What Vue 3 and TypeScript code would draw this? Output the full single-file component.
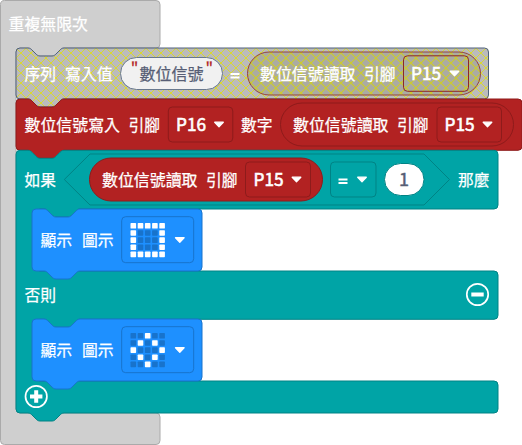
<script setup lang="ts">
const notch = 'c2,0 3,1 4,2l4,4c1,1 2,2 4,2h12c2,0 3,-1 4,-2l4,-4c1,-1 2,-2 4,-2'
const tab = 'c-2,0 -3,1 -4,2l-4,4c-1,1 -2,2 -4,2h-12c-2,0 -3,-1 -4,-2l-4,-4c-1,-1 -2,-2 -4,-2'

function statement(x: number, y: number, right: number, bottom: number): string {
  return `M${x},${y + 4}a4,4 0 0 1 4,-4h8${notch}H${right - 4}a4,4 0 0 1 4,4V${bottom - 4}a4,4 0 0 1 -4,4H${x + 48}${tab}h-8a4,4 0 0 1 -4,-4z`
}

const loopPath =
  `M.5,4.5a4,4 0 0 1 4,-4H156a4,4 0 0 1 4,4V44a4,4 0 0 1 -4,4H64${tab}h-8a4,4 0 0 0 -4,4V409a4,4 0 0 0 4,4H156a4,4 0 0 1 4,4V440.5a4,4 0 0 1 -4,4H4.5a4,4 0 0 1 -4,-4z`

const ifPath =
  `M16,154.300a4,4 0 0 1 4,-4h8${notch}H494a4,4 0 0 1 4,4V205a4,4 0 0 1 -4,4H80${tab}h-4a4,4 0 0 0 -4,4V267a4,4 0 0 0 4,4` +
  `H494a4,4 0 0 1 4,4V315.300a4,4 0 0 1 -4,4H80${tab}h-4a4,4 0 0 0 -4,4V377a4,4 0 0 0 4,4` +
  `H494a4,4 0 0 1 4,4V409a4,4 0 0 1 -4,4H64${tab}h-8a4,4 0 0 1 -4,-4z`

interface Label { x: number; y: number; w: number; text: string; kind?: string }
const labels: Label[] = [
  { x: 8.500, y: 30, w: 79.500, text: '重複無限次' },
  { x: 24.500, y: 80, w: 31.500, text: '序列' },
  { x: 65, y: 80, w: 47.500, text: '寫入值' },
  { x: 139.500, y: 80, w: 64, text: '數位信號', kind: 'dark' },
  { x: 260, y: 80, w: 95.500, text: '數位信號讀取' },
  { x: 364, y: 80, w: 31.500, text: '引腳' },
  { x: 411, y: 80, w: 30, text: 'P15', kind: 'pin' },
  { x: 24.500, y: 131, w: 95.500, text: '數位信號寫入' },
  { x: 128.500, y: 131, w: 31.500, text: '引腳' },
  { x: 176, y: 131, w: 30, text: 'P16', kind: 'pin' },
  { x: 241, y: 131, w: 31.500, text: '數字' },
  { x: 293, y: 131, w: 95.500, text: '數位信號讀取' },
  { x: 397, y: 131, w: 31.500, text: '引腳' },
  { x: 444.500, y: 131, w: 30, text: 'P15', kind: 'pin' },
  { x: 24.500, y: 186, w: 31.500, text: '如果' },
  { x: 102, y: 186, w: 95.500, text: '數位信號讀取' },
  { x: 206, y: 186, w: 31.500, text: '引腳' },
  { x: 253.500, y: 186, w: 30, text: 'P15', kind: 'pin' },
  { x: 399, y: 186, w: 10, text: '1', kind: 'one dark' },
  { x: 458, y: 186, w: 31.500, text: '那麼' },
  { x: 40.500, y: 246, w: 31.500, text: '顯示' },
  { x: 82, y: 246, w: 31.500, text: '圖示' },
  { x: 24.500, y: 301, w: 31.500, text: '否則' },
  { x: 40.500, y: 356, w: 31.500, text: '顯示' },
  { x: 82, y: 356, w: 31.500, text: '圖示' },
]

const arrows: [number, number][] = [
  [454.500, 73.500], [219, 124.500], [487.500, 124.500], [296.500, 179.500], [362, 179.500], [179.800, 240], [179.800, 350],
]

const icons = [
  { y: 223, rows: ['11111', '10001', '10001', '10001', '11111'] },
  { y: 333, rows: ['00100', '01010', '10001', '01010', '00100'] },
]
</script>

<template>
  <svg class="workspace" width="522" height="445" viewBox="0 0 522 445">
    <defs>
      <pattern id="disabled" patternUnits="userSpaceOnUse" width="10" height="10" x="16" y="48">
        <rect width="10" height="10" fill="#bbb" />
        <path d="M0,0L10,10M10,0L0,10" stroke="#d8d832" stroke-width="1" />
      </pattern>
      <pattern id="disabledInner" patternUnits="userSpaceOnUse" width="10" height="10" x="16" y="48">
        <rect width="10" height="10" fill="#ababa2" />
        <path d="M0,0L10,10M10,0L0,10" stroke="#cccc2c" stroke-width="1.100" />
      </pattern>
    </defs>

    <path class="loop" :d="loopPath" />

    <path class="disabled" :d="statement(16, 48, 488.5, 99)" />
    <rect class="string" x="120.500" y="57.500" width="102" height="32" rx="16" />
    <rect class="disabled-value" x="247.500" y="52" width="233" height="43" rx="21.500" />
    <rect class="disabled-field" x="403.500" y="55.800" width="65" height="35.500" rx="4" />

    <path class="red" :d="statement(16, 99, 522, 150.300)" />
    <rect class="red" x="168.300" y="107" width="64.500" height="35" rx="4" />
    <rect class="red" x="280.500" y="103" width="233" height="43" rx="21.500" />
    <rect class="red" x="437" y="107" width="64.500" height="35" rx="4" />

    <path class="teal" :d="ifPath" />
    <path class="teal" d="M64.300,179.500L90,154H424L449.500,179.500L424,205H90z" />
    <rect class="red" x="89.500" y="158" width="233" height="43" rx="21.500" />
    <rect class="red" x="245.500" y="162" width="65" height="35" rx="4" />
    <rect class="teal" x="330.500" y="162" width="45.500" height="35" rx="4" />
    <rect class="number" x="384.500" y="163.500" width="39.500" height="32" rx="16" />

    <path class="blue" :d="statement(32, 209, 202, 271)" />
    <path class="blue" :d="statement(32, 319, 202, 381)" />
    <g v-for="icon in icons" :key="icon.y">
      <rect class="blue" x="121.700" :y="icon.y - 6.300" width="72" height="46" rx="4" />
      <template v-for="(row, r) in icon.rows" :key="r">
        <rect
          v-for="(cell, c) in row.split('')"
          :key="c"
          :class="cell === '1' ? 'led on' : 'led'"
          :x="130.500 + c * 7.200"
          :y="icon.y + r * 7.150"
          width="5.600"
          height="5.600"
          rx=".7"
        />
      </template>
    </g>

    <path class="bars" d="M230.500,74h9M230.500,77.500h9M338.500,179.500h9M338.500,183h9" />
    <path
      v-for="(a, i) in arrows"
      :key="i"
      class="arrow"
      :d="`M${a[0] - 4.300},${a[1] - 2.300}h8.600l-4.300,4.600z`"
    />
    <text
      v-for="(l, i) in labels"
      :key="i"
      :class="['label', l.kind]"
      :x="l.x"
      :y="l.y"
      :textLength="l.w"
      lengthAdjust="spacingAndGlyphs"
    >{{ l.text }}</text>
    <text class="quote" x="130.800" y="74">"</text>
    <text class="quote" x="205.500" y="74">"</text>

    <g class="button">
      <circle cx="477.500" cy="294.500" r="10.700" />
      <path d="M471.300,294.500h12.400" />
      <circle cx="36.200" cy="396.500" r="10.700" />
      <path d="M30,396.500h12.400M36.200,390.300v12.400" />
    </g>
  </svg>
</template>

<style scoped>
.workspace { display: block; background: #fff; }
.loop { fill: #cfcfcf; stroke: #aaa; }
.disabled { fill: url(#disabled); stroke: #4e617c; }
.string { fill: #f1f1f1; stroke: #68788e; }
.disabled-value { fill: url(#disabledInner); stroke: #95443c; }
.disabled-field { fill: none; stroke: #8e2727; }
.red { fill: #b22222; stroke: #8e1b1b; }
.teal { fill: #00a4a6; stroke: #008385; }
.blue { fill: #1e90ff; stroke: #1873cc; }
.number { fill: #fff; stroke: #008385; }
.led { fill: #1873cc; }
.led.on { fill: #fff; }
.bars { stroke: #fff; stroke-width: 1.800; }
.arrow { fill: #fff; stroke: #fff; stroke-width: 1.300; stroke-linejoin: round; }
.label {
  fill: #fff;
  font: 400 16px "Noto Sans CJK TC", sans-serif;
  stroke: #fff;
  stroke-width: .25;
}
.pin { font-size: 17.500px; stroke-width: .6; }
.one { font-size: 18px; stroke-width: .5; }
.dark { fill: #575e75; stroke: #575e75; }
.quote { fill: #b22222; font: 400 16px "Noto Sans CJK TC", sans-serif; stroke: #b22222; stroke-width: .3; }
.button circle { fill: none; stroke: #fff; stroke-width: 1.700; }
.button path { stroke: #fff; stroke-width: 4; }
</style>
